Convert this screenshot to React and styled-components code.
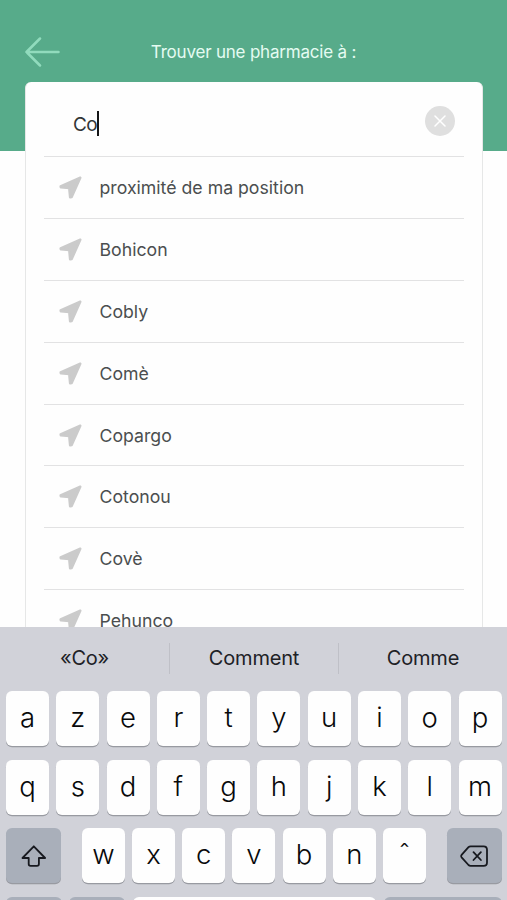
import React from "react";
import styled, { createGlobalStyle } from "styled-components";

const GlobalStyle = createGlobalStyle`
  * { box-sizing: border-box; }
  body {
    margin: 0;
    background: #fefefe;
    font-family: Inter, "Liberation Sans", sans-serif;
    overflow: hidden;
  }
`;

const Screen = styled.main`
  width: 507px;
  height: 900px;
  display: flex;
  flex-direction: column;
  overflow: hidden;
  background: linear-gradient(#57ab8a 151.3px, #fefefe 151.3px);
`;

const Header = styled.header`
  height: 82px;
  flex: none;
  display: grid;
  grid-template-columns: 60px 1fr 60px;
  align-items: center;
  padding-top: 22.6px;
`;

const BackIcon = styled.svg`
  width: 36px;
  height: 32px;
  margin-left: 25px;
  fill: none;
  stroke: #91dbbd;
  stroke-width: 2.5;
  stroke-linecap: round;
  stroke-linejoin: round;
`;

const Title = styled.h1`
  margin: 0;
  text-align: center;
  color: #e5fbf2;
  font-size: 17px;
  line-height: 22px;
  font-weight: 400;
  letter-spacing: -0.2px;
`;

const Card = styled.section`
  flex: 1;
  min-height: 0;
  overflow: hidden;
  margin: 0 24.5px 0 25px;
  padding: 0 18px 0 18px;
  background: #fefefe;
  border: 1px solid #e6e7e7;
  border-top: 0;
  border-bottom: 0;
  border-radius: 6px 6px 0 0;
`;

const SearchField = styled.div`
  height: 75px;
  display: flex;
  align-items: center;
  justify-content: space-between;
  padding: 9px 9px 0 29px;
  border-bottom: 1px solid #e2e2e3;
`;

const Query = styled.span`
  display: flex;
  align-items: center;
  color: #333637;
  font-size: 19px;
  line-height: 24px;
  letter-spacing: -0.6px;
`;

const QueryText = styled.span`
  padding-top: 2px;
`;

const Caret = styled.span`
  width: 2px;
  height: 25px;
  margin-left: -0.5px;
  background: #151617;
`;

const ClearButton = styled.button`
  width: 30px;
  height: 30px;
  margin-top: -5px;
  padding: 0;
  border: 0;
  border-radius: 50%;
  display: grid;
  place-items: center;
  background: #dfdfdf;

  svg {
    width: 12px;
    height: 12px;
    stroke: #fff;
    stroke-width: 1.5;
    stroke-linecap: round;
  }
`;

const Results = styled.ul`
  margin: 0;
  padding: 0;
  list-style: none;
`;

const Result = styled.li`
  height: 61.9px;
  display: flex;
  align-items: center;
  gap: 17.5px;
  padding-left: 15px;
  border-bottom: 1px solid #e2e2e3;
  color: #4b4e4f;
  font-size: 17.7px;
  line-height: 24px;
`;

const PlaceName = styled.span`
  padding-top: 1px;
`;

const PlaceIcon = styled.svg`
  width: 23px;
  height: 23px;
  flex: none;
  fill: #cbcbcb;
  stroke: #cbcbcb;
  stroke-width: 2.4;
  stroke-linejoin: round;
`;

const Keyboard = styled.section`
  flex: none;
  height: 273px;
  overflow: hidden;
  background: #d1d2d9;
`;

const Suggestions = styled.div`
  height: 64px;
  display: grid;
  grid-template-columns: repeat(3, 1fr);
  align-items: center;
  padding-bottom: 1px;
`;

const Suggestion = styled.span`
  height: 31px;
  line-height: 31px;
  text-align: center;
  color: #202126;
  font-size: 20px;
  letter-spacing: -0.2px;

  & + & {
    border-left: 1px solid #bfc0c7;
  }
`;

const KeyRow = styled.div`
  display: flex;
  justify-content: ${(p) => (p.$spread ? "space-between" : "flex-start")};
  gap: ${(p) => (p.$spread ? 0 : 7.3)}px;
  height: 68.6px;
  padding: 0 5.5px 0 6px;
`;

const KeyGroup = styled.div`
  display: flex;
  gap: 7.3px;
`;

const Key = styled.button`
  flex: ${(p) => (p.$width ? `0 0 ${p.$width}px` : "1 1 0")};
  height: 55.2px;
  min-width: 0;
  padding: 0 0 3px;
  border: 0;
  border-radius: 6px;
  display: flex;
  align-items: center;
  justify-content: center;
  background: ${(p) => (p.$dark ? "#a9afba" : "#fefefe")};
  box-shadow: 0 1.3px 0 #989aa1;
  color: #08090b;
  font-family: inherit;
  font-size: 27.5px;
  font-weight: 350;
  line-height: 34px;
`;

const KeyIcon = styled.svg`
  width: 30px;
  height: 26px;
  margin-top: 4px;
  fill: none;
  stroke: #17191f;
  stroke-width: 1.8;
  stroke-linejoin: round;
  stroke-linecap: round;
`;

const places = [
  "proximité de ma position",
  "Bohicon",
  "Cobly",
  "Comè",
  "Copargo",
  "Cotonou",
  "Covè",
  "Pehunco",
];

const LetterRow = ({ letters }) => (
  <KeyRow>
    {letters.split("").map((letter) => (
      <Key key={letter}>{letter}</Key>
    ))}
  </KeyRow>
);

export default function App() {
  return (
    <>
      <GlobalStyle />
      <Screen>
        <Header>
          <BackIcon viewBox="0 0 36 32">
            <path d="M33.5 16H1.5M15 2.5L1.5 16L15 29.5" />
          </BackIcon>
          <Title>Trouver une pharmacie à :</Title>
        </Header>
        <Card>
          <SearchField>
            <Query>
              <QueryText>Co</QueryText>
              <Caret />
            </Query>
            <ClearButton aria-label="Effacer">
              <svg viewBox="0 0 12 12">
                <path d="M1 1L11 11M11 1L1 11" />
              </svg>
            </ClearButton>
          </SearchField>
          <Results>
            {places.map((place) => (
              <Result key={place}>
                <PlaceIcon viewBox="0 0 23 23">
                  <path d="M21.3 1.7L1.6 10.3L1.8 11.4L10.2 12.1L11.1 21.3L12.7 21Z" />
                </PlaceIcon>
                <PlaceName>{place}</PlaceName>
              </Result>
            ))}
          </Results>
        </Card>
        <Keyboard>
          <Suggestions>
            <Suggestion>«Co»</Suggestion>
            <Suggestion>Comment</Suggestion>
            <Suggestion>Comme</Suggestion>
          </Suggestions>
          <LetterRow letters="azertyuiop" />
          <LetterRow letters="qsdfghjklm" />
          <KeyRow $spread>
            <Key $width={54.7} $dark aria-label="Majuscule">
              <KeyIcon viewBox="0 0 30 26">
                <path d="M15.8 3.3L4.5 15H10.7V21Q10.7 22.9 12.6 22.9H19Q20.9 22.9 20.9 21V15H27.1Z" />
              </KeyIcon>
            </Key>
            <KeyGroup>
              {"wxcvbnˆ".split("").map((letter) => (
                <Key key={letter} $width={42.9}>
                  {letter}
                </Key>
              ))}
            </KeyGroup>
            <Key $width={54.4} $dark aria-label="Supprimer">
              <KeyIcon viewBox="0 0 30 26">
                <path d="M11.6 3.3H24.6Q28 3.3 28 6.7V19.5Q28 22.9 24.6 22.9H11.6Q10.4 22.9 9.5 22L2.6 14.3Q1.6 13.1 2.6 11.9L9.5 4.2Q10.4 3.3 11.6 3.3ZM14.5 9.2L21.9 17M21.9 9.2L14.5 17" />
              </KeyIcon>
            </Key>
          </KeyRow>
          <KeyRow>
            <Key $width={56} $dark />
            <Key $width={56} $dark />
            <Key />
            <Key $width={118} $dark />
          </KeyRow>
        </Keyboard>
      </Screen>
    </>
  );
}
